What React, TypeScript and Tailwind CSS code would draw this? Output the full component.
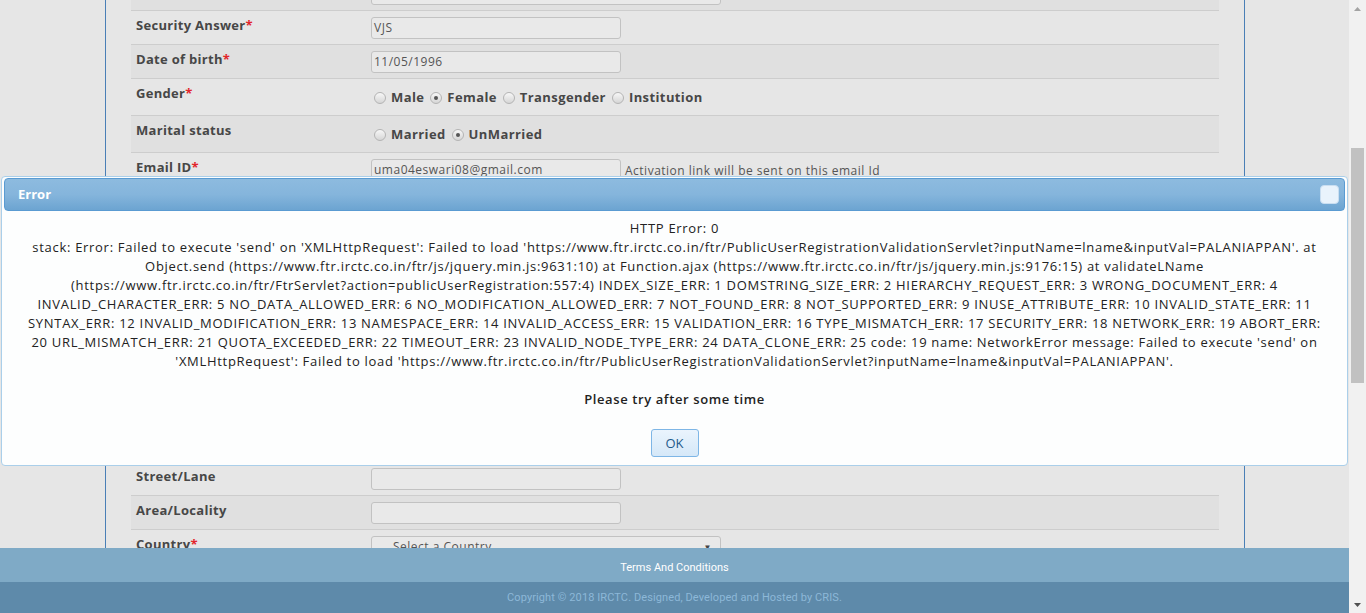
import React from "react";

const FONT = { fontFamily: '"Open Sans", "Noto Sans", Arial, sans-serif' };

const Req = () => <span className="text-[#e2252b]">*</span>;

// Single form row: label on the left, field on the right
const Row = ({ label, req, dark, tall, children }: any) => (
  <div
    className={`flex border-b border-[#cdcdcd] ${dark ? "bg-[#e0e0e0]" : "bg-[#e6e6e6]"} ${tall ? "h-[37px]" : "h-[34px]"}`}
  >
    <div className="w-[240px] shrink-0 pl-[5px] pt-[5px] text-[13px] leading-[18px] font-bold tracking-[0.3px] text-[#474747]">
      {label}
      {req && <Req />}
    </div>
    <div className="flex-1">{children}</div>
  </div>
);

const TextBox = ({ value, wide }: any) => (
  <div
    className={`mt-[6px] flex h-[22px] items-center rounded-[3px] border border-[#c2c2c2] bg-[#e9e9e9] px-[2px] text-[12px] tracking-[0.5px] text-[#555] ${wide ? "w-[350px]" : "w-[250px]"}`}
  >
    {value}
  </div>
);

const Radio = ({ label, checked }: any) => (
  <label className="flex items-center gap-[5px]">
    <span className="flex h-[12px] w-[12px] items-center justify-center rounded-full border border-[#b4b4b4] bg-gradient-to-b from-[#f7f7f7] to-[#d6d6d6]">
      {checked && <span className="h-[4px] w-[4px] rounded-full bg-[#555]" />}
    </span>
    <span className="text-[13px] font-bold tracking-[0.4px] text-[#474747]">{label}</span>
  </label>
);

const RadioGroup = ({ items, checked }: any) => (
  <div className="mt-[10px] flex h-[18px] items-center gap-[6px] pl-[3px]">
    {items.map((it: string) => (
      <Radio key={it} label={it} checked={it === checked} />
    ))}
  </div>
);

const errorLines = [
  "HTTP Error: 0",
  "stack: Error: Failed to execute 'send' on 'XMLHttpRequest': Failed to load 'https://www.ftr.irctc.co.in/ftr/PublicUserRegistrationValidationServlet?inputName=lname&inputVal=PALANIAPPAN'. at",
  "Object.send (https://www.ftr.irctc.co.in/ftr/js/jquery.min.js:9631:10) at Function.ajax (https://www.ftr.irctc.co.in/ftr/js/jquery.min.js:9176:15) at validateLName",
  "(https://www.ftr.irctc.co.in/ftr/FtrServlet?action=publicUserRegistration:557:4) INDEX_SIZE_ERR: 1 DOMSTRING_SIZE_ERR: 2 HIERARCHY_REQUEST_ERR: 3 WRONG_DOCUMENT_ERR: 4",
  "INVALID_CHARACTER_ERR: 5 NO_DATA_ALLOWED_ERR: 6 NO_MODIFICATION_ALLOWED_ERR: 7 NOT_FOUND_ERR: 8 NOT_SUPPORTED_ERR: 9 INUSE_ATTRIBUTE_ERR: 10 INVALID_STATE_ERR: 11",
  "SYNTAX_ERR: 12 INVALID_MODIFICATION_ERR: 13 NAMESPACE_ERR: 14 INVALID_ACCESS_ERR: 15 VALIDATION_ERR: 16 TYPE_MISMATCH_ERR: 17 SECURITY_ERR: 18 NETWORK_ERR: 19 ABORT_ERR:",
  "20 URL_MISMATCH_ERR: 21 QUOTA_EXCEEDED_ERR: 22 TIMEOUT_ERR: 23 INVALID_NODE_TYPE_ERR: 24 DATA_CLONE_ERR: 25 code: 19 name: NetworkError message: Failed to execute 'send' on",
  "'XMLHttpRequest': Failed to load 'https://www.ftr.irctc.co.in/ftr/PublicUserRegistrationValidationServlet?inputName=lname&inputVal=PALANIAPPAN'.",
];

const ErrorDialog = () => (
  <div className="absolute left-[1px] top-[176px] h-[290px] w-[1347px] rounded-[4px] border border-[#aacfea] bg-[#fdfefe] px-[2px] pt-[1px]">
    {/* title bar */}
    <div className="flex h-[33px] items-center justify-between rounded-[4px] border border-[#5a9bd2] bg-gradient-to-b from-[#8dbbdf] via-[#85b5dc] to-[#6ca4d1] pl-[13px] pr-[5px]">
      <span className="text-[13px] font-bold text-white">Error</span>
      <span className="h-[19px] w-[19px] rounded-[4px] border border-[#c9def1] bg-[#e9f3fc]" />
    </div>
    {/* body */}
    <div className="flex flex-col items-center pt-[8px] text-[13px] leading-[19px] tracking-[0.7px] text-[#222]">
      {errorLines.map((l, i) => (
        <div key={i} className="whitespace-nowrap">
          {l}
        </div>
      ))}
      <div className="h-[19px]" />
      <div className="font-semibold tracking-[0.6px]">Please try after some time</div>
      <button className="mt-[20px] h-[28px] w-[48px] rounded-[3px] border border-[#7eb6e6] bg-gradient-to-b from-[#eaf4fd] to-[#d5e8f8] text-[13px] tracking-normal text-[#1d5a8a]">
        OK
      </button>
    </div>
  </div>
);

const Scrollbar = () => (
  <div className="flex w-[17px] shrink-0 flex-col items-center bg-[#f1f1f1]">
    <div className="flex h-[17px] items-center justify-center">
      <svg width="7" height="4" viewBox="0 0 7 4">
        <path d="M0 4 L3.5 0 L7 4 Z" fill="#a3a3a3" />
      </svg>
    </div>
    <div className="mt-[131px] h-[235px] w-[13px] bg-[#c1c1c1]" />
    <div className="flex-1" />
    <div className="flex h-[17px] items-center justify-center">
      <svg width="7" height="4" viewBox="0 0 7 4">
        <path d="M0 0 L7 0 L3.5 4 Z" fill="#505050" />
      </svg>
    </div>
  </div>
);

export default function App() {
  return (
    <div className="flex h-[613px] w-[1366px] overflow-hidden bg-[#e6e6e6]" style={FONT}>
      <div className="relative flex w-[1349px] flex-col">
        {/* scrolled form */}
        <div className="flex min-h-0 flex-1 overflow-hidden">
          <div className="ml-[105px] w-[1140px] border-x border-[#4a7fb6] pl-[25px] pr-[25px]">
            <div className="-mt-[23px]">
              <Row label="Security Question" req dark>
                <TextBox value="" wide />
              </Row>
              <Row label="Security Answer" req>
                <TextBox value="VJS" />
              </Row>
              <Row label="Date of birth" req dark>
                <TextBox value="11/05/1996" />
              </Row>
              <Row label="Gender" req tall>
                <RadioGroup items={["Male", "Female", "Transgender", "Institution"]} checked="Female" />
              </Row>
              <Row label="Marital status" dark tall>
                <RadioGroup items={["Married", "UnMarried"]} checked="UnMarried" />
              </Row>
              <Row label="Email ID" req>
                <div className="flex items-start gap-[4px]">
                  <TextBox value="uma04eswari08@gmail.com" />
                  <span className="mt-[9px] text-[12px] tracking-[0.5px] text-[#555]">
                    Activation link will be sent on this email Id
                  </span>
                </div>
              </Row>
              {/* rows hidden under the dialog */}
              <div className="h-[275px]" />
              <Row label="Street/Lane">
                <TextBox value="" />
              </Row>
              <Row label="Area/Locality" dark>
                <TextBox value="" />
              </Row>
              <Row label="Country" req>
                <div className="mt-[6px] flex h-[22px] w-[350px] items-center justify-between rounded-[3px] border border-[#c2c2c2] bg-[#e9e9e9] pl-[21px] pr-[8px] text-[12px] tracking-[0.5px] text-[#555]">
                  <span>Select a Country</span>
                  <span className="text-[8px] text-[#444]">▼</span>
                </div>
              </Row>
            </div>
          </div>
        </div>
        {/* footer */}
        <div
          className="flex h-[34px] shrink-0 items-center justify-center bg-[#7faac6] pt-[6px] text-[11px] text-white"
          style={{ fontFamily: "Roboto, Arial, sans-serif" }}
        >
          Terms And Conditions
        </div>
        <div
          className="flex h-[31px] shrink-0 items-center justify-center bg-[#5e8aaa] pt-[2px] text-[11px] tracking-[0.1px] text-[#8db8d8]"
          style={{ fontFamily: "Roboto, Arial, sans-serif" }}
        >
          Copyright © 2018 IRCTC. Designed, Developed and Hosted by CRIS.
        </div>
        <ErrorDialog />
      </div>
      <Scrollbar />
    </div>
  );
}
